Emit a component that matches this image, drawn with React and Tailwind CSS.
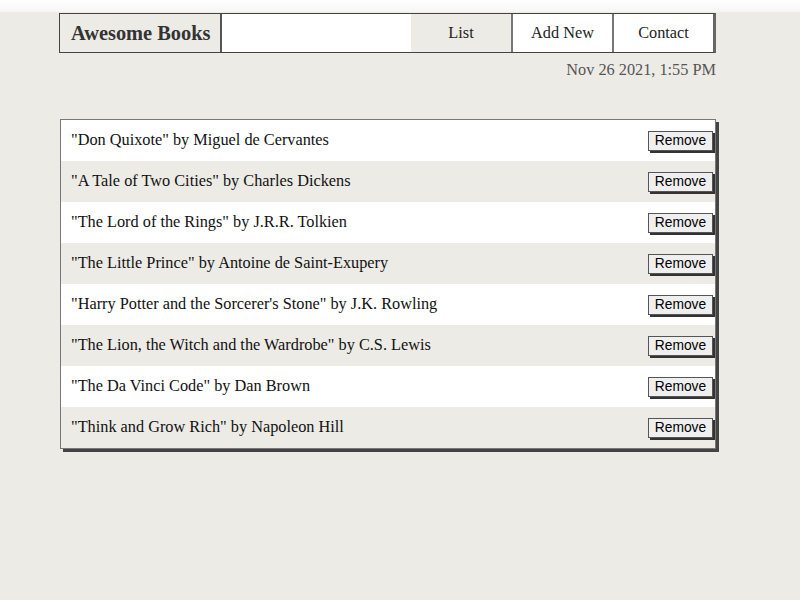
const books = [
  { title: "Don Quixote", author: "Miguel de Cervantes" },
  { title: "A Tale of Two Cities", author: "Charles Dickens" },
  { title: "The Lord of the Rings", author: "J.R.R. Tolkien" },
  { title: "The Little Prince", author: "Antoine de Saint-Exupery" },
  { title: "Harry Potter and the Sorcerer's Stone", author: "J.K. Rowling" },
  { title: "The Lion, the Witch and the Wardrobe", author: "C.S. Lewis" },
  { title: "The Da Vinci Code", author: "Dan Brown" },
  { title: "Think and Grow Rich", author: "Napoleon Hill" },
];

export default function App() {
  return (
    <div className="min-h-[600px] w-[800px] bg-[#edebe6] font-['Liberation_Serif',serif] text-[#111]">
      {/* top strip */}
      <div className="h-[12px] bg-gradient-to-b from-white to-[#f6f6f6]" />

      <div className="mx-[59px] w-[657px]">
        {/* Nav */}
        <header className="mt-px flex h-[40px] border border-r-[3px] border-[#444] border-r-[#666]">
          <div className="flex w-[162px] items-center border-r-2 border-[#555] pl-[11px] text-[20.4px] font-bold text-[#333]">
            Awesome Books
          </div>
          <div className="flex-1 bg-white" />
          <nav className="flex text-[16.3px] text-[#222]">
            <a className="flex w-[100px] items-center justify-center">List</a>
            <a className="flex w-[101px] items-center justify-center border-l-2 border-[#777] bg-white">
              Add New
            </a>
            <a className="flex w-[101px] items-center justify-center border-l-2 border-[#777] bg-white">
              Contact
            </a>
          </nav>
        </header>

        {/* Date */}
        <p className="mt-[7px] text-right text-[16.3px] leading-[20px] text-[#555]">
          Nov 26 2021, 1:55 PM
        </p>

        {/* Book list */}
        <ul className="mt-[39px] ml-px border border-[#777] shadow-[3px_3px_0_#444]">
          {books.map((b, i) => (
            <li
              key={b.title}
              className={`flex h-[41px] items-center justify-between pl-[10px] pr-[2px] text-[16.3px] ${
                i % 2 === 0 ? "bg-white" : "bg-[#edebe6]"
              }`}
            >
              <span className="-mt-px">
                "{b.title}" by {b.author}
              </span>
              <button className="mt-px h-[20px] w-[65px] border border-[#555] bg-[#efefef] font-['Liberation_Sans',sans-serif] text-[13.8px] leading-none text-black shadow-[2px_2px_0_#333]">
                Remove
              </button>
            </li>
          ))}
        </ul>
      </div>
    </div>
  );
}
